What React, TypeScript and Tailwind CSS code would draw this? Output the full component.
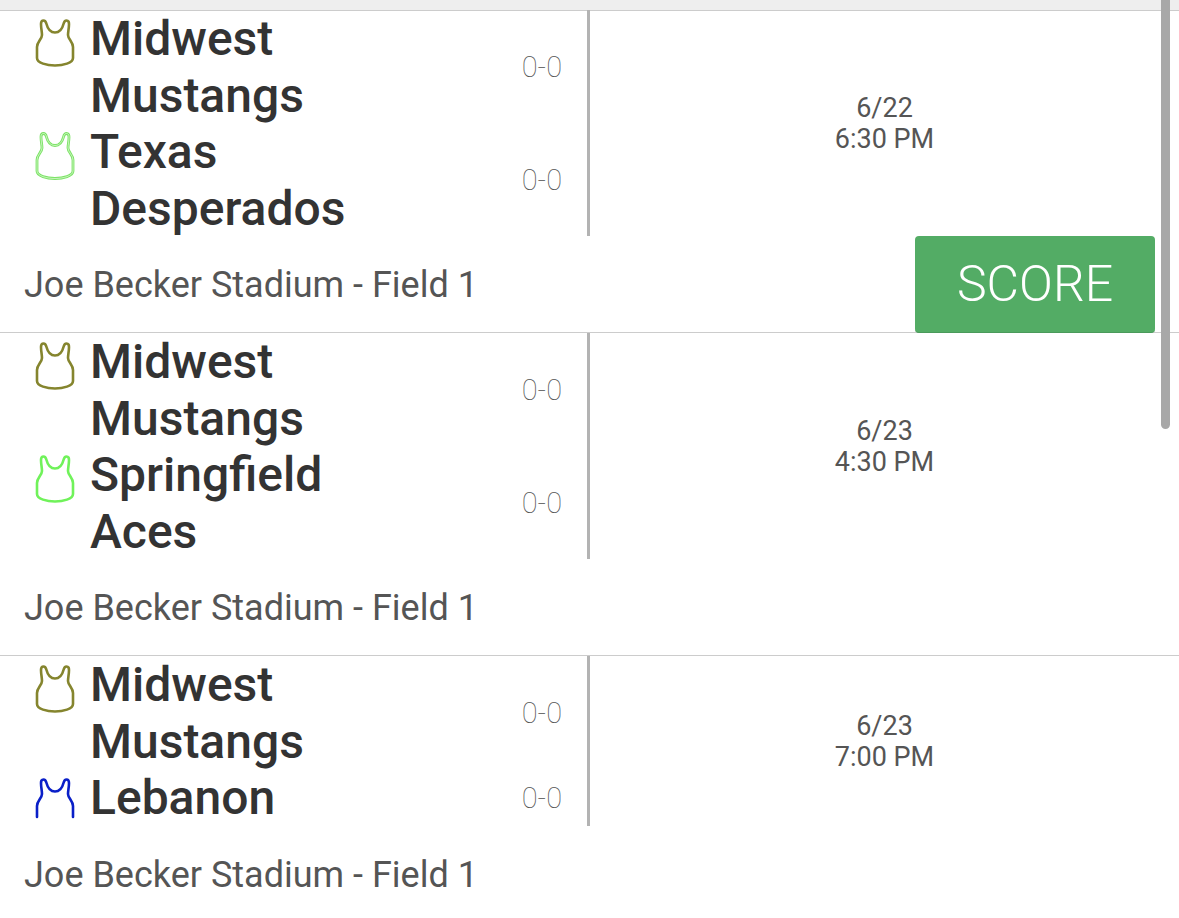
const JERSEY_CLOSED =
  'M8.5 1.5C6.5 1.5 6 3 6 5C6 9 7 13 7 16C7 20 2 23 2 28V39C2 44 12 46.5 20 46.5C28 46.5 38 44 38 39V28C38 23 33 20 33 16C33 13 34 9 34 5C34 3 33.5 1.5 31.5 1.5C29.5 1.5 29 3 28.5 5C27.5 9 25 13.5 20 13.5C15 13.5 12.5 9 11.5 5C11 3 10.5 1.5 8.5 1.5Z';
const JERSEY_OPEN =
  'M2 39V28C2 23 7 20 7 16C7 13 6 9 6 5C6 3 6.5 1.5 8.5 1.5C10.5 1.5 11 3 11.5 5C12.5 9 15 13.5 20 13.5C25 13.5 27.5 9 28.5 5C29 3 29.5 1.5 31.5 1.5C33.5 1.5 34 3 34 5C34 9 33 13 33 16C33 20 38 23 38 28V39';

interface JerseyProps {
  color: string;
  outline?: boolean;
  open?: boolean;
}

function Jersey({ color, outline, open }: JerseyProps) {
  const d = open ? JERSEY_OPEN : JERSEY_CLOSED;
  return (
    <svg width="40" height="48" viewBox="0 0 40 48" fill="none" className="shrink-0 mt-[9px] ml-[35px]">
      <path d={d} stroke={color} strokeWidth={outline ? 2.8 : 2.6} strokeLinecap="round" strokeLinejoin="round" />
      {outline && <path d={d} stroke="#e8fbe2" strokeWidth={0.7} />}
    </svg>
  );
}

interface Team {
  name: string[];
  color: string;
  outline?: boolean;
  open?: boolean;
}

function TeamRow({ team }: { team: Team }) {
  return (
    <div className="flex items-start relative">
      <Jersey color={team.color} outline={team.outline} open={team.open} />
      <div className="ml-[15px] w-[300px] pt-[1px] -mb-[1px] text-[48px] leading-[56.5px] font-medium text-[#333333]">
        {team.name.map((line) => (
          <div key={line}>{line}</div>
        ))}
      </div>
      <div className="ml-auto mr-[25px] self-center pt-[2px] text-[29px] font-thin text-[#555555]">0-0</div>
    </div>
  );
}

interface Game {
  teams: Team[];
  date: string;
  time: string;
  score?: boolean;
}

const midwest: Team = { name: ['Midwest', 'Mustangs'], color: '#85852e' };

const games: Game[] = [
  {
    teams: [midwest, { name: ['Texas', 'Desperados'], color: '#7be365', outline: true }],
    date: '6/22',
    time: '6:30 PM',
    score: true,
  },
  {
    teams: [midwest, { name: ['Springfield', 'Aces'], color: '#70f25a' }],
    date: '6/23',
    time: '4:30 PM',
  },
  {
    teams: [midwest, { name: ['Lebanon'], color: '#0a1fc8', open: true }],
    date: '6/23',
    time: '7:00 PM',
  },
];

function GameCard({ game }: { game: Game }) {
  return (
    <div className="border-b border-[#cccccc]">
      <div className="flex">
        <div className="w-[590px] border-r-[3px] border-[#b3b3b3]">
          {game.teams.map((team) => (
            <TeamRow key={team.name[0]} team={team} />
          ))}
        </div>
        <div className="flex-1 flex flex-col items-center justify-center pt-[2px] text-[27px] leading-[31px] text-[#555555]">
          <div>{game.date}</div>
          <div>{game.time}</div>
        </div>
      </div>
      <div className="h-[96px] flex items-center justify-between pl-[24px] pr-[24px]">
        <span className="pt-[2px] text-[36px] text-[#555555]">Joe Becker Stadium - Field 1</span>
        {game.score && (
          <button className="w-[240px] h-[97px] pt-[2px] rounded-[4px] border-b border-[#4a9a5b] bg-[#53ac65] text-white text-[50px] font-light">
            SCORE
          </button>
        )}
      </div>
    </div>
  );
}

export default function App() {
  return (
    <div className="relative h-[918px] overflow-hidden bg-white font-['Roboto',sans-serif]">
      <div className="h-[11px] bg-[#eeeeee] border-b border-[#cccccc]" />
      <div className="-mt-[0.6px]">
        {games.map((game) => (
          <GameCard key={game.time} game={game} />
        ))}
      </div>
      {/* overlay scrollbar */}
      <div className="absolute top-0 right-[9px] w-[9px] h-[429px] rounded-b-full bg-[#a8a8a8]" />
    </div>
  );
}
